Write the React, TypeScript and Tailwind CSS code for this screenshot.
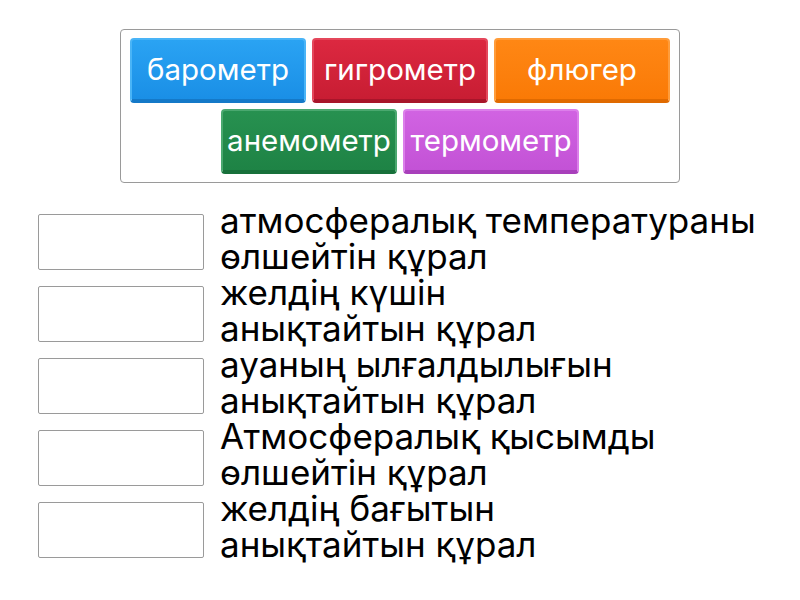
import React from 'react'

const tiles = [
  { label: 'барометр', cls: 'bg-gradient-to-b from-[#2aa3f3] to-[#1a8fe6] border-[#49b4f7] border-b-[#1479c8]' },
  { label: 'гигрометр', cls: 'bg-gradient-to-b from-[#dc2840] to-[#c81d33] border-[#e4475b] border-b-[#a8152a]' },
  { label: 'флюгер', cls: 'bg-gradient-to-b from-[#ff8714] to-[#fa7a06] border-[#ff9c3a] border-b-[#e06a00]' },
  { label: 'анемометр', cls: 'bg-gradient-to-b from-[#279150] to-[#1e8345] border-[#4aa86f] border-b-[#17703a]' },
  { label: 'термометр', cls: 'bg-gradient-to-b from-[#d163e2] to-[#c352d6] border-[#dc7fea] border-b-[#a83fbb]' },
]

const rows = [
  ['атмосфералық температураны', 'өлшейтін құрал'],
  ['желдің күшін', 'анықтайтын құрал'],
  ['ауаның ылғалдылығын', 'анықтайтын құрал'],
  ['Атмосфералық қысымды', 'өлшейтін құрал'],
  ['желдің бағытын', 'анықтайтын құрал'],
]

const Tile = ({ label, cls }: { label: string; cls: string }) => (
  <div
    className={`w-[176px] h-[65px] rounded-[4px] border-2 border-b-4 flex items-center justify-center text-white text-[29.5px] ${cls}`}
  >
    {label}
  </div>
)

const App = () => {
  return (
    <div className="w-[800px] h-[600px] bg-white flex flex-col items-center pt-[29px]" style={{ fontFamily: 'Inter, "Noto Sans", sans-serif' }}>
      <div className="w-[560px] h-[154px] border border-[#9a9a9a] rounded-[4px] p-2 flex flex-wrap justify-center content-start gap-[6px]">
        {tiles.map((t) => (
          <Tile key={t.label} label={t.label} cls={t.cls} />
        ))}
      </div>

      <div className="w-[800px] pl-[38px] mt-[19px] flex flex-col">
        {rows.map((r) => (
          <div key={r[0]} className="flex items-start h-[72px]">
            <div className="w-[166px] h-[56px] mt-[12px] border border-[#9a9a9a] rounded-[2px] shrink-0" />
            <p className="ml-[16px] text-[35px] leading-[36px] text-black whitespace-nowrap">
              {r[0]}
              <br />
              {r[1]}
            </p>
          </div>
        ))}
      </div>
    </div>
  )
}

export default App
